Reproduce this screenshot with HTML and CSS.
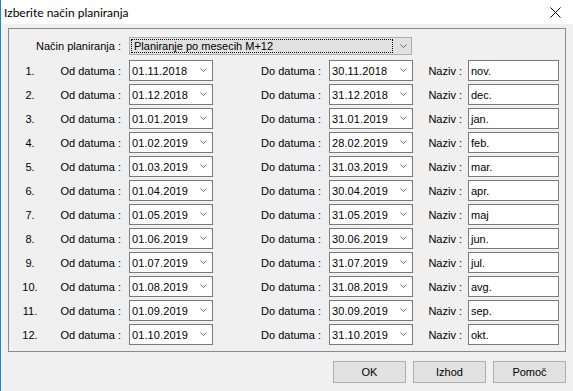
FILE: index.html
```html
<!DOCTYPE html>
<html lang="sl">
<head>
<meta charset="utf-8">
<title>Izberite način planiranja</title>
<link rel="stylesheet" href="styles.css">
</head>
<body>
<div class="window">
  <div class="titlebar">
    <span class="title">Izberite način planiranja</span>
    <svg class="close" width="11" height="11" viewBox="0 0 11 11"><path d="M0.5 0.5 L10.5 10.5 M10.5 0.5 L0.5 10.5" stroke="#000" stroke-width="1" fill="none"/></svg>
  </div>
  <div class="body">
    <div class="group">
      <div class="mode-row">
        <span class="mode-label">Način planiranja :</span>
        <div class="combo">
          <div class="combo-focus">Planiranje po mesecih M+12</div>
          <svg class="chev" width="7" height="5" viewBox="0 0 7 5"><polyline points="0.5,0.5 3.5,3.5 6.5,0.5" fill="none" stroke="#6d6d6d" stroke-width="1"/></svg>
        </div>
      </div>
      <div class="rows">
        <div class="row"><span class="num">1.</span><span class="lbl od">Od datuma :</span><div class="date"><span>01.11.2018</span><svg class="chev" width="7" height="5" viewBox="0 0 7 5"><polyline points="0.5,0.5 3.5,3.5 6.5,0.5" fill="none" stroke="#6d6d6d" stroke-width="1"/></svg></div><span class="lbl do">Do datuma :</span><div class="date"><span>30.11.2018</span><svg class="chev" width="7" height="5" viewBox="0 0 7 5"><polyline points="0.5,0.5 3.5,3.5 6.5,0.5" fill="none" stroke="#6d6d6d" stroke-width="1"/></svg></div><span class="lbl nz">Naziv :</span><div class="name">nov.</div></div>
        <div class="row"><span class="num">2.</span><span class="lbl od">Od datuma :</span><div class="date"><span>01.12.2018</span><svg class="chev" width="7" height="5" viewBox="0 0 7 5"><polyline points="0.5,0.5 3.5,3.5 6.5,0.5" fill="none" stroke="#6d6d6d" stroke-width="1"/></svg></div><span class="lbl do">Do datuma :</span><div class="date"><span>31.12.2018</span><svg class="chev" width="7" height="5" viewBox="0 0 7 5"><polyline points="0.5,0.5 3.5,3.5 6.5,0.5" fill="none" stroke="#6d6d6d" stroke-width="1"/></svg></div><span class="lbl nz">Naziv :</span><div class="name">dec.</div></div>
        <div class="row"><span class="num">3.</span><span class="lbl od">Od datuma :</span><div class="date"><span>01.01.2019</span><svg class="chev" width="7" height="5" viewBox="0 0 7 5"><polyline points="0.5,0.5 3.5,3.5 6.5,0.5" fill="none" stroke="#6d6d6d" stroke-width="1"/></svg></div><span class="lbl do">Do datuma :</span><div class="date"><span>31.01.2019</span><svg class="chev" width="7" height="5" viewBox="0 0 7 5"><polyline points="0.5,0.5 3.5,3.5 6.5,0.5" fill="none" stroke="#6d6d6d" stroke-width="1"/></svg></div><span class="lbl nz">Naziv :</span><div class="name">jan.</div></div>
        <div class="row"><span class="num">4.</span><span class="lbl od">Od datuma :</span><div class="date"><span>01.02.2019</span><svg class="chev" width="7" height="5" viewBox="0 0 7 5"><polyline points="0.5,0.5 3.5,3.5 6.5,0.5" fill="none" stroke="#6d6d6d" stroke-width="1"/></svg></div><span class="lbl do">Do datuma :</span><div class="date"><span>28.02.2019</span><svg class="chev" width="7" height="5" viewBox="0 0 7 5"><polyline points="0.5,0.5 3.5,3.5 6.5,0.5" fill="none" stroke="#6d6d6d" stroke-width="1"/></svg></div><span class="lbl nz">Naziv :</span><div class="name">feb.</div></div>
        <div class="row"><span class="num">5.</span><span class="lbl od">Od datuma :</span><div class="date"><span>01.03.2019</span><svg class="chev" width="7" height="5" viewBox="0 0 7 5"><polyline points="0.5,0.5 3.5,3.5 6.5,0.5" fill="none" stroke="#6d6d6d" stroke-width="1"/></svg></div><span class="lbl do">Do datuma :</span><div class="date"><span>31.03.2019</span><svg class="chev" width="7" height="5" viewBox="0 0 7 5"><polyline points="0.5,0.5 3.5,3.5 6.5,0.5" fill="none" stroke="#6d6d6d" stroke-width="1"/></svg></div><span class="lbl nz">Naziv :</span><div class="name">mar.</div></div>
        <div class="row"><span class="num">6.</span><span class="lbl od">Od datuma :</span><div class="date"><span>01.04.2019</span><svg class="chev" width="7" height="5" viewBox="0 0 7 5"><polyline points="0.5,0.5 3.5,3.5 6.5,0.5" fill="none" stroke="#6d6d6d" stroke-width="1"/></svg></div><span class="lbl do">Do datuma :</span><div class="date"><span>30.04.2019</span><svg class="chev" width="7" height="5" viewBox="0 0 7 5"><polyline points="0.5,0.5 3.5,3.5 6.5,0.5" fill="none" stroke="#6d6d6d" stroke-width="1"/></svg></div><span class="lbl nz">Naziv :</span><div class="name">apr.</div></div>
        <div class="row"><span class="num">7.</span><span class="lbl od">Od datuma :</span><div class="date"><span>01.05.2019</span><svg class="chev" width="7" height="5" viewBox="0 0 7 5"><polyline points="0.5,0.5 3.5,3.5 6.5,0.5" fill="none" stroke="#6d6d6d" stroke-width="1"/></svg></div><span class="lbl do">Do datuma :</span><div class="date"><span>31.05.2019</span><svg class="chev" width="7" height="5" viewBox="0 0 7 5"><polyline points="0.5,0.5 3.5,3.5 6.5,0.5" fill="none" stroke="#6d6d6d" stroke-width="1"/></svg></div><span class="lbl nz">Naziv :</span><div class="name">maj</div></div>
        <div class="row"><span class="num">8.</span><span class="lbl od">Od datuma :</span><div class="date"><span>01.06.2019</span><svg class="chev" width="7" height="5" viewBox="0 0 7 5"><polyline points="0.5,0.5 3.5,3.5 6.5,0.5" fill="none" stroke="#6d6d6d" stroke-width="1"/></svg></div><span class="lbl do">Do datuma :</span><div class="date"><span>30.06.2019</span><svg class="chev" width="7" height="5" viewBox="0 0 7 5"><polyline points="0.5,0.5 3.5,3.5 6.5,0.5" fill="none" stroke="#6d6d6d" stroke-width="1"/></svg></div><span class="lbl nz">Naziv :</span><div class="name">jun.</div></div>
        <div class="row"><span class="num">9.</span><span class="lbl od">Od datuma :</span><div class="date"><span>01.07.2019</span><svg class="chev" width="7" height="5" viewBox="0 0 7 5"><polyline points="0.5,0.5 3.5,3.5 6.5,0.5" fill="none" stroke="#6d6d6d" stroke-width="1"/></svg></div><span class="lbl do">Do datuma :</span><div class="date"><span>31.07.2019</span><svg class="chev" width="7" height="5" viewBox="0 0 7 5"><polyline points="0.5,0.5 3.5,3.5 6.5,0.5" fill="none" stroke="#6d6d6d" stroke-width="1"/></svg></div><span class="lbl nz">Naziv :</span><div class="name">jul.</div></div>
        <div class="row"><span class="num">10.</span><span class="lbl od">Od datuma :</span><div class="date"><span>01.08.2019</span><svg class="chev" width="7" height="5" viewBox="0 0 7 5"><polyline points="0.5,0.5 3.5,3.5 6.5,0.5" fill="none" stroke="#6d6d6d" stroke-width="1"/></svg></div><span class="lbl do">Do datuma :</span><div class="date"><span>31.08.2019</span><svg class="chev" width="7" height="5" viewBox="0 0 7 5"><polyline points="0.5,0.5 3.5,3.5 6.5,0.5" fill="none" stroke="#6d6d6d" stroke-width="1"/></svg></div><span class="lbl nz">Naziv :</span><div class="name">avg.</div></div>
        <div class="row"><span class="num">11.</span><span class="lbl od">Od datuma :</span><div class="date"><span>01.09.2019</span><svg class="chev" width="7" height="5" viewBox="0 0 7 5"><polyline points="0.5,0.5 3.5,3.5 6.5,0.5" fill="none" stroke="#6d6d6d" stroke-width="1"/></svg></div><span class="lbl do">Do datuma :</span><div class="date"><span>30.09.2019</span><svg class="chev" width="7" height="5" viewBox="0 0 7 5"><polyline points="0.5,0.5 3.5,3.5 6.5,0.5" fill="none" stroke="#6d6d6d" stroke-width="1"/></svg></div><span class="lbl nz">Naziv :</span><div class="name">sep.</div></div>
        <div class="row"><span class="num">12.</span><span class="lbl od">Od datuma :</span><div class="date"><span>01.10.2019</span><svg class="chev" width="7" height="5" viewBox="0 0 7 5"><polyline points="0.5,0.5 3.5,3.5 6.5,0.5" fill="none" stroke="#6d6d6d" stroke-width="1"/></svg></div><span class="lbl do">Do datuma :</span><div class="date"><span>31.10.2019</span><svg class="chev" width="7" height="5" viewBox="0 0 7 5"><polyline points="0.5,0.5 3.5,3.5 6.5,0.5" fill="none" stroke="#6d6d6d" stroke-width="1"/></svg></div><span class="lbl nz">Naziv :</span><div class="name">okt.</div></div>
      </div>
    </div>
    <div class="buttons">
      <button class="btn">OK</button>
      <button class="btn">Izhod</button>
      <button class="btn">Pomoč</button>
    </div>
  </div>
</div>
</body>
</html>
```
FILE: styles.css
```css
* { box-sizing: border-box; }
html, body { margin: 0; padding: 0; }
body { background: #f0f0f0; }

.window {
  width: 573px;
  height: 391px;
  border-left: 1px solid #1883d7;
  background: #f0f0f0;
  display: flex;
  flex-direction: column;
  font-family: "Liberation Sans", Arial, sans-serif;
  font-size: 11px;
  color: #000;
}

.titlebar {
  height: 24px;
  background: #fff;
  display: flex;
  align-items: center;
  justify-content: space-between;
  padding: 0 12px 0 3px;
}
.title {
  font-family: Lato, "Noto Sans", sans-serif;
  font-size: 12px;
  color: #000;
}
.close { display: block; }

.body {
  flex: 1;
  padding: 4px 7px 0 7px;
  display: flex;
  flex-direction: column;
}

.group {
  height: 324px;
  border: 1px solid #8c8c8c;
  padding-top: 8px;
}

.mode-row {
  display: flex;
  align-items: center;
  height: 18px;
}
.mode-label {
  width: 120px;
  padding-right: 8px;
  text-align: right;
  white-space: nowrap;
}
.combo {
  width: 283px;
  height: 18px;
  background: #e1e1e1;
  border: 1px solid #adadad;
  display: flex;
  align-items: center;
  padding: 1px 4px 1px 1px;
}
.combo-focus {
  flex: 1;
  height: 14px;
  border: 1px dotted #000;
  padding-left: 2px;
  line-height: 12px;
  margin-right: 7px;
  white-space: nowrap;
}

.rows {
  margin-top: 5px;
  display: flex;
  flex-direction: column;
  gap: 3px;
}
.row {
  display: flex;
  align-items: center;
  height: 21px;
}
.num {
  width: 42px;
  text-align: center;
}
.lbl {
  text-align: right;
  white-space: nowrap;
}
.lbl.od { width: 78px; padding-right: 8px; }
.lbl.do { width: 116px; padding-right: 8px; }
.lbl.nz { width: 55px; padding-right: 6px; }

.date {
  width: 84px;
  height: 21px;
  background: #fff;
  border: 1px solid #7a7a7a;
  display: flex;
  align-items: center;
  justify-content: space-between;
  padding: 0 5px 0 2px;
}
.date span { letter-spacing: 0.1px; }

.chev { display: block; }

.name {
  width: 91px;
  height: 21px;
  background: #fff;
  border: 1px solid #7a7a7a;
  display: flex;
  align-items: center;
  padding-left: 2px;
}

.buttons {
  margin-top: 9px;
  display: flex;
  justify-content: flex-end;
  gap: 7px;
}
.btn {
  width: 73px;
  height: 22px;
  background: #e1e1e1;
  border: 1px solid #adadad;
  font-family: "Liberation Sans", Arial, sans-serif;
  font-size: 11px;
  color: #000;
  padding: 0;
}
```
